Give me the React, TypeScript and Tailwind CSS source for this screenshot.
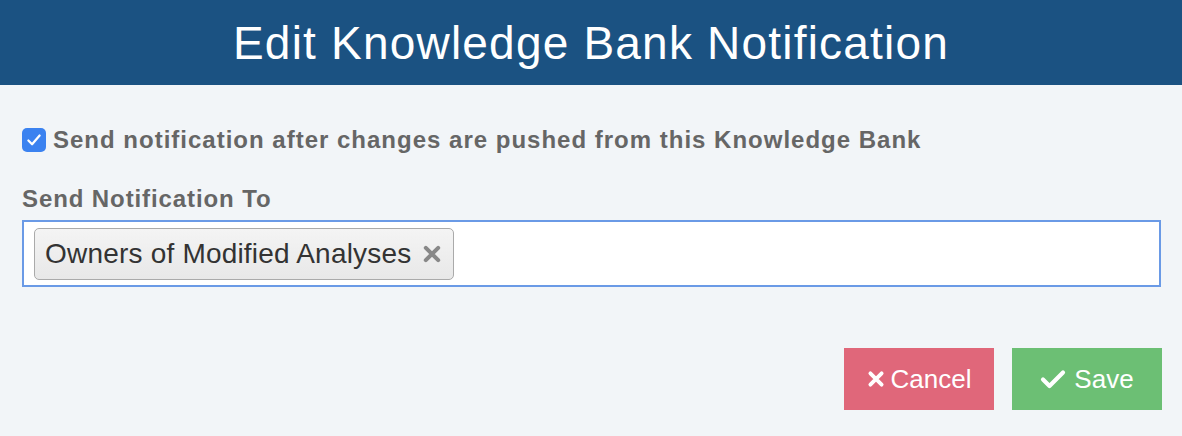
import React from "react";

export default function App() {
  return (
    <div
      className="w-[1182px] h-[436px] bg-[#f2f5f8] flex flex-col"
      style={{ fontFamily: '"Liberation Sans", Arial, sans-serif' }}
    >
      <div className="h-[85px] bg-[#1b5282] flex items-center justify-center">
        <h1 className="text-white text-[46px] tracking-[1.2px] leading-none font-normal">
          Edit Knowledge Bank Notification
        </h1>
      </div>
      <div className="px-[22px] flex flex-col">
        <label className="flex items-center gap-[7px] mt-[43px] h-[24px]">
          <span className="w-[24px] h-[24px] rounded-[5px] bg-[#3b82f0] flex items-center justify-center">
            <svg width="18" height="18" viewBox="0 0 16 16" fill="none">
              <path d="M3 8.5 L6.3 11.8 L13 4" stroke="white" strokeWidth="2" strokeLinecap="round" strokeLinejoin="round" />
            </svg>
          </span>
          <span className="text-[24px] tracking-[1px] font-bold text-[#666666] leading-none">
            Send notification after changes are pushed from this Knowledge Bank
          </span>
        </label>
        <div className="mt-[35px] text-[24px] tracking-[0.9px] font-bold text-[#666666] leading-none">
          Send Notification To
        </div>
        <div className="mt-[9px] mr-[-1px] h-[67px] border-2 border-[#6a9ae6] bg-white flex items-center px-[10px]">
          <div className="h-[52px] flex items-center gap-[12px] pl-[10px] pr-[12px] rounded-[5px] border border-[#aaaaaa] bg-gradient-to-b from-[#f4f4f4] to-[#e8e8e8]">
            <span className="text-[28px] tracking-[0.2px] text-[#333333] leading-none">Owners of Modified Analyses</span>
            <svg width="18" height="18" viewBox="0 0 16 16">
              <path d="M2.5 2.5 L13.5 13.5 M13.5 2.5 L2.5 13.5" stroke="#888888" strokeWidth="3.6" strokeLinecap="round" />
            </svg>
          </div>
        </div>
        <div className="mt-[61px] flex justify-end gap-[18px]">
          <button className="w-[150px] h-[62px] bg-[#e0677a] text-white text-[26px] flex items-center justify-center gap-[6px]">
            <svg width="18" height="18" viewBox="0 0 16 16">
              <path d="M3 3 L13 13 M13 3 L3 13" stroke="white" strokeWidth="3.4" strokeLinecap="round" />
            </svg>
            <span className="leading-none">Cancel</span>
          </button>
          <button className="w-[150px] h-[62px] bg-[#6cbf74] text-white text-[26px] flex items-center justify-center gap-[8px] mr-[-2px]">
            <svg width="26" height="22" viewBox="0 0 26 22">
              <path d="M3 11.5 L9.5 18 L23 4.5" stroke="white" strokeWidth="4.2" fill="none" strokeLinecap="round" strokeLinejoin="round" />
            </svg>
            <span className="leading-none">Save</span>
          </button>
        </div>
      </div>
    </div>
  );
}
